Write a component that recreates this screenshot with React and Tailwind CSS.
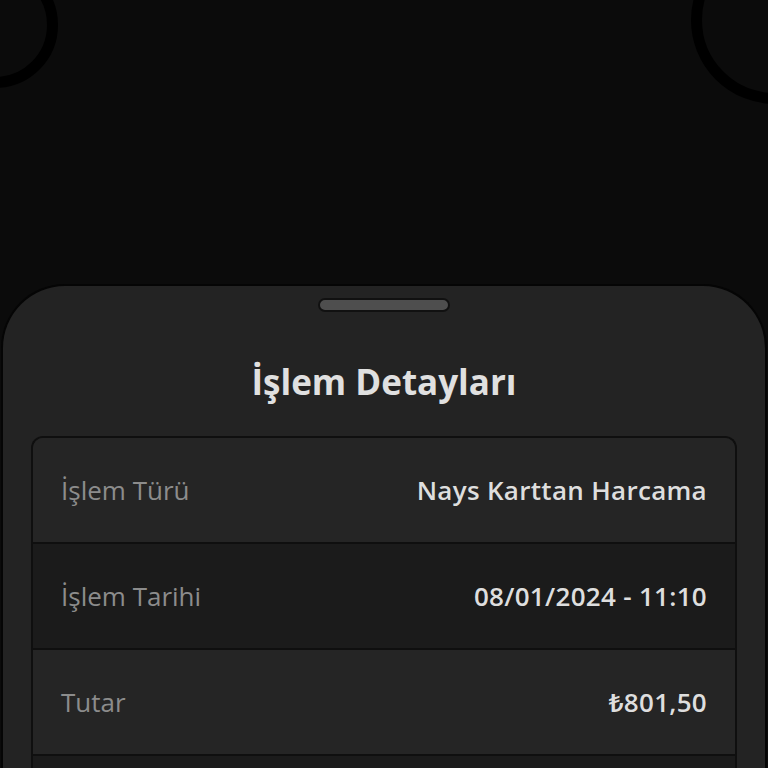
import React from 'react';

const rows = [
    { label: 'İşlem Türü', value: 'Nays Karttan Harcama', dark: false },
    { label: 'İşlem Tarihi', value: '08/01/2024 - 11:10', dark: true },
    { label: 'Tutar', value: '₺801,50', dark: false },
    { label: '', value: '', dark: true },
];

const DetailRow = ({ label, value, dark }) => (
    <div className={`h-[106px] shrink-0 flex items-center justify-between px-[28px] border-b-2 border-[#0f0f0f] ${dark ? 'bg-[#1b1b1b]' : 'bg-[#252525]'}`}>
        <span className="text-[26px] text-[#8c8c8c] font-medium">{label}</span>
        <span className="text-[26px] text-[#dedede] font-semibold tracking-[0.3px]">{value}</span>
    </div>
);

export default function App() {
    return (
        <div className="relative w-[768px] h-[768px] overflow-hidden bg-[#0b0b0b]" style={{ fontFamily: '"Open Sans", "Noto Sans", sans-serif' }}>
            <div className="absolute -left-[68px] -top-[38px] w-[126px] h-[126px] rounded-full border-[11px] border-black"></div>
            <div className="absolute left-[691px] -top-[64px] w-[168px] h-[168px] rounded-full border-[11px] border-black"></div>

            <div className="flex flex-col h-full pt-[284px] px-[1px]">
                <div className="flex-1 flex flex-col bg-[#232323] rounded-t-[64px] border-2 border-b-0 border-[#050505] overflow-hidden">
                    <div className="flex justify-center pt-[12px]">
                        <div className="w-[132px] h-[14px] rounded-full bg-[#4e4e4e] border-2 border-[#111]"></div>
                    </div>
                    <h1 className="mt-[48px] text-center text-[35px] leading-[44px] font-bold text-[#e0e0e0]">İşlem Detayları</h1>
                    <div className="mt-[32px] mx-[28px] flex flex-col rounded-t-[12px] border-2 border-b-0 border-[#0f0f0f] overflow-hidden">
                        {rows.map((r, i) => (
                            <DetailRow key={i} {...r} />
                        ))}
                    </div>
                </div>
            </div>
        </div>
    );
}
